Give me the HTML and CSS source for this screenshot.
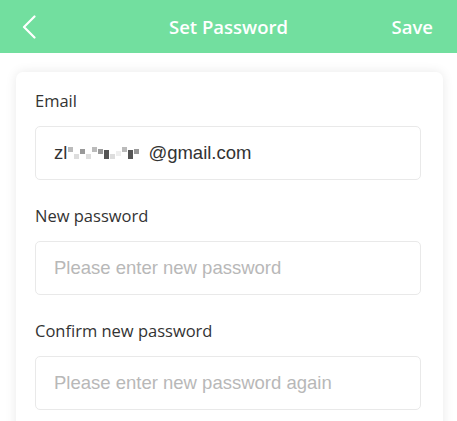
FILE: index.html
```html
<!DOCTYPE html>
<html>
<head>
<meta charset="utf-8">
<link rel="stylesheet" href="styles.css">
</head>
<body>
<header class="topbar">
  <svg class="back" width="14" height="24" viewBox="0 0 14 24"><path d="M12.5 1.5 L2 12 L12.5 22.5" fill="none" stroke="#fff" stroke-width="2.2" stroke-linecap="round" stroke-linejoin="round"/></svg>
  <div class="title">Set Password</div>
  <div class="save">Save</div>
</header>
<main class="card">
  <div class="field">
    <div class="label">Email</div>
    <div class="input value">zl<span class="mosaic"><i class="m1"></i><i class="m2"></i><i class="m3"></i><i class="m2"></i><i class="m1"></i><i class="m3"></i><i class="m4"></i><i class="m2"></i><i class="m5"></i><i class="m1"></i><i class="m4"></i><i class="m3"></i></span>@gmail.com</div>
  </div>
  <div class="field">
    <div class="label">New password</div>
    <div class="input placeholder">Please enter new password</div>
  </div>
  <div class="field">
    <div class="label">Confirm new password</div>
    <div class="input placeholder">Please enter new password again</div>
  </div>
</main>
</body>
</html>
```
FILE: styles.css
```css
html, body { margin: 0; padding: 0; background: #fff; }
body { font-family: "Open Sans", "DejaVu Sans", sans-serif; overflow: hidden; height: 421px; }
.topbar {
  height: 53px;
  background: #72df9f;
  display: flex;
  align-items: center;
  padding: 0 24px 0 22px;
  position: relative;
  color: #fff;
}
.back { display: block; }
.title {
  position: absolute;
  left: 0; right: 0;
  text-align: center;
  font-size: 18.5px;
  font-weight: 600;
  pointer-events: none;
}
.save { margin-left: auto; font-size: 18.5px; font-weight: 600; }
.card {
  margin: 19px 14px 0 16px;
  background: #fff;
  border-radius: 7px;
  box-shadow: 0 0 12px rgba(0,0,0,0.09);
  padding: 19px 22px 20px 19px;
  height: 340px;
}
.field + .field { margin-top: 26px; }
.label {
  font-size: 16.5px;
  line-height: 20px;
  color: #333;
  margin-bottom: 15px;
}
.input {
  height: 54px;
  box-sizing: border-box;
  border: 1px solid #e9e9e9;
  border-radius: 5px;
  padding: 0 18px;
  display: flex;
  align-items: center;
  font-family: "Liberation Sans", Arial, sans-serif;
  font-size: 18.5px;
}
.value { color: #333; }
.placeholder { color: #b8b8b8; }
.mosaic { display: inline-flex; align-items: center; gap: 1px; width: 79px; height: 18px; margin: 0 1px; }
.mosaic i { display: block; width: 5px; height: 5px; }
.m1 { background: #bbb; margin-top: -8px; }
.m2 { background: #ddd; margin-top: 6px; }
.m3 { background: #999; margin-top: -4px; }
.m4 { background: #555; height: 9px !important; margin-top: 2px; }
.m5 { background: #eee; }
```
